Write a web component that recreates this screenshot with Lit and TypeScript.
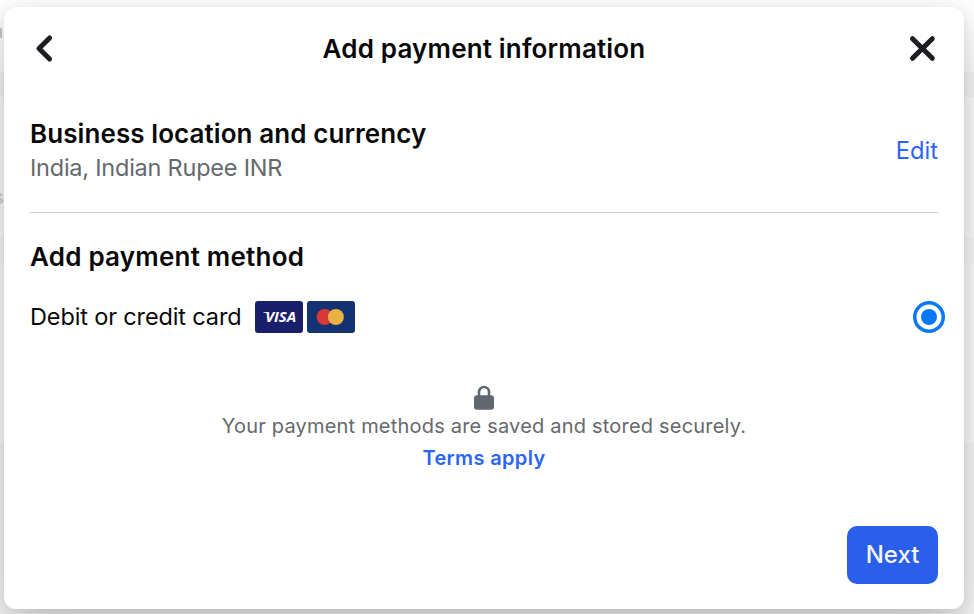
import { LitElement, html, css } from "lit";
import { customElement } from "lit/decorators.js";

@customElement("app-root")
export class AppRoot extends LitElement {
  static styles = css`
    * { box-sizing: border-box; }
    :host {
      display: block;
      position: relative;
      width: 974px;
      height: 614px;
      padding: 7px 10px 5px 4px;
      overflow: hidden;
      background: linear-gradient(#fff 0 72px, #f8f8f8 72px 97px, #fff 97px 237px, #fafafa 237px 264px, #fff 264px 443px, #f9f9f9 443px);
      font-family: Inter, "Liberation Sans", sans-serif;
      color: #080809;
    }
    .behind { position: absolute; z-index: 1; width: 12px; font-size: 20px; line-height: 20px; font-weight: 600; color: #b8b8b8; clip-path: inset(0 var(--cut) 0 0); }
    .first { --cut: 2px; top: 21px; left: -8px; }
    .second { --cut: 1px; top: 187px; left: -7px; }
    .dialog {
      position: relative;
      display: flex;
      flex-direction: column;
      width: 960px;
      height: 602px;
      padding: 0 26px 25px;
      border-radius: 12px;
      background: #fff;
      box-shadow: 0 24px 56px rgba(0, 0, 0, 0.2), 0 4px 16px rgba(0, 0, 0, 0.1);
    }
    header { display: flex; align-items: center; justify-content: space-between; height: 84px; }
    h1, h2, p { margin: 0; white-space: nowrap; }
    h1, h2 { font-size: 26px; line-height: 34px; font-weight: 600; letter-spacing: 0.17px; }
    h1 { margin-left: 2px; }
    .icon { display: block; }
    .location {
      display: flex;
      align-items: center;
      justify-content: space-between;
      height: 122px;
      padding-bottom: 2px;
      border-bottom: 1px solid #ced0d4;
    }
    .biz { letter-spacing: 0.08px; }
    .sub { font-size: 23.5px; line-height: 34px; letter-spacing: -0.23px; color: #65686c; }
    .edit { font-size: 23.7px; line-height: 34px; color: #2c64f6; }
    .method { padding-top: 27px; }
    .method-title { letter-spacing: 0.22px; }
    .option { display: flex; align-items: center; height: 32px; margin-top: 27px; }
    .label { width: 225px; font-size: 23.5px; line-height: 32px; letter-spacing: -0.14px; white-space: nowrap; }
    .cards { display: flex; gap: 4px; }
    .radio {
      display: grid;
      place-items: center;
      width: 32px;
      height: 32px;
      margin: 0 -7px 0 auto;
      border-radius: 50%;
      box-shadow: inset 0 0 0 3.5px #0a78f5;
    }
    .dot { width: 16px; height: 16px; border-radius: 50%; background: #0a78f5; }
    .secure { display: flex; flex-direction: column; align-items: center; margin-top: 52px; font-size: 20px; line-height: 32px; color: #65686c; }
    .note { letter-spacing: 0.2px; }
    .terms { color: #2c64f6; font-weight: 600; letter-spacing: 0.36px; }
    .next {
      width: 91px;
      height: 58px;
      margin: auto 0 0 auto;
      padding: 0;
      border: 0;
      border-radius: 10px;
      background: #2a60e9;
      color: #f2f4f7;
      font: 500 24px/58px Inter, "Liberation Sans", sans-serif;
    }
    .visa { font: italic 700 14.5px "Open Sans", sans-serif; }
  `;

  render() {
    return html`
      <span class="behind first">a</span>
      <span class="behind second">s</span>
      <section class="dialog">
        <header>
          <svg class="icon" width="30" height="34" viewBox="0 0 30 34" fill="none" stroke="#1c1e21" stroke-width="5" stroke-linecap="round" stroke-linejoin="round"><path d="M19.6 6L9 16.5L19.6 27" /></svg>
          <h1>Add payment information</h1>
          <svg class="icon" width="32" height="34" viewBox="0 0 32 34" fill="none" stroke="#1c1e21" stroke-width="5" stroke-linecap="round"><path d="M6.5 6.7L26.3 26.3M26.3 6.7L6.5 26.3" /></svg>
        </header>
        <div class="location">
          <div>
            <h2 class="biz">Business location and currency</h2>
            <p class="sub">India, Indian Rupee INR</p>
          </div>
          <span class="edit">Edit</span>
        </div>
        <div class="method">
          <h2 class="method-title">Add payment method</h2>
          <div class="option">
            <span class="label">Debit or credit card</span>
            <div class="cards">
              <svg width="48" height="32" viewBox="0 0 48 32"><rect width="48" height="32" rx="3" fill="#1a1f6b" /><path d="M8.3 11.1H13.2L13.6 13Q11.5 11.8 8.3 11.6Z" fill="#fff" /><text class="visa" x="10.2" y="21.2" textLength="31" lengthAdjust="spacingAndGlyphs" fill="#fff">VISA</text></svg>
              <svg width="48" height="32" viewBox="0 0 48 32"><rect width="48" height="32" rx="3" fill="#143272" /><circle cx="17.7" cy="16" r="8" fill="#d93835" /><circle cx="28.9" cy="16" r="8" fill="#e9b044" /></svg>
            </div>
            <div class="radio"><div class="dot"></div></div>
          </div>
        </div>
        <div class="secure">
          <svg class="icon" width="20" height="25" viewBox="0 0 20 25"><path d="M5 12V7a5 5 0 0 1 10 0V12" fill="none" stroke="#606770" stroke-width="2.6" /><rect y="10.3" width="20" height="14.5" rx="3" fill="#606770" /></svg>
          <p class="note">Your payment methods are saved and stored securely.</p>
          <span class="terms">Terms apply</span>
        </div>
        <button class="next">Next</button>
      </section>
    `;
  }
}
